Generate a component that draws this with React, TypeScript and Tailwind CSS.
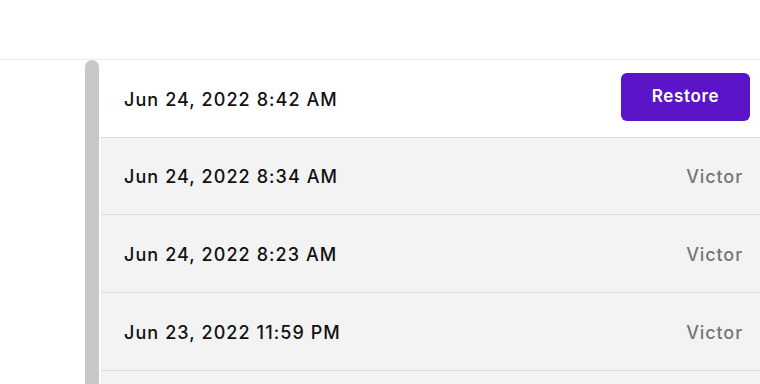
const rows = [
  { date: 'Jun 24, 2022 8:42 AM', current: true },
  { date: 'Jun 24, 2022 8:34 AM', author: 'Victor' },
  { date: 'Jun 24, 2022 8:23 AM', author: 'Victor' },
  { date: 'Jun 23, 2022 11:59 PM', author: 'Victor' },
]

export default function App() {
  return (
    <div className="h-[384px] w-[760px] overflow-hidden bg-white font-['Inter',sans-serif]">
      <div className="h-[60px] border-b border-[#ececec]" />
      <div className="flex">
        <div className="w-[85px]" />
        <div className="h-[340px] w-[14px] rounded-t-full bg-[#c8c8c8]" />
        <div className="ml-[2px] flex-1">
          {rows.map((row) => (
            <div
              key={row.date}
              className={`flex h-[77.67px] items-center justify-between border-b border-[#dcdcdc] pl-[23px] ${
                row.current ? 'bg-white pr-[10px]' : 'bg-[#f3f3f3] pr-[17px]'
              }`}
            >
              <span className="pt-[2px] text-[18px] font-medium tracking-[0.06em] text-[#111]">{row.date}</span>
              {row.current ? (
                <button
                  type="button"
                  className="mb-[3px] h-[48px] w-[129px] rounded-[6px] bg-[#5b14c8] text-[17px] font-semibold tracking-[0.04em] text-white"
                >
                  Restore
                </button>
              ) : (
                <span className="pt-[2px] text-[18px] font-medium tracking-[0.05em] text-[#767676]">{row.author}</span>
              )}
            </div>
          ))}
          <div className="h-[77.67px] bg-[#f3f3f3]" />
        </div>
      </div>
    </div>
  )
}
